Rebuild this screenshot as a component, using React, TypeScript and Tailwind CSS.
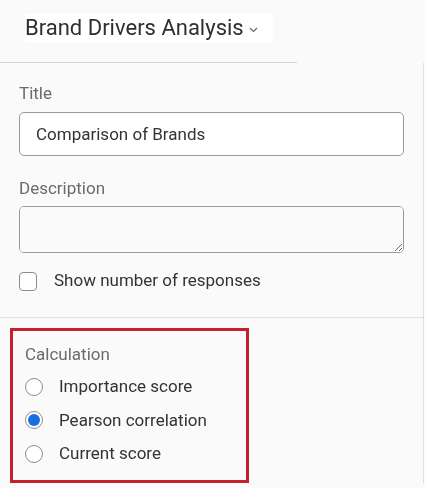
import { useState } from "react";

const options = [
  { id: "importance", label: "Importance score" },
  { id: "pearson", label: "Pearson correlation" },
  { id: "current", label: "Current score" },
];

function Radio({ checked }: { checked: boolean }) {
  return (
    <span className="flex h-[18px] w-[18px] shrink-0 items-center justify-center rounded-full border border-[#8c8c8c] bg-white">
      {checked && <span className="h-[12px] w-[12px] rounded-full bg-[#1a6fe0]" />}
    </span>
  );
}

export default function App() {
  const [calc, setCalc] = useState("pearson");
  const [showCount, setShowCount] = useState(false);

  return (
    <div
      className="h-[488px] w-[425px] overflow-hidden bg-[#fafafa] text-[#333]"
      style={{ fontFamily: "Roboto, 'Liberation Sans', sans-serif" }}
    >
      <div className="h-[63px] w-[297px] border-b border-[#d4d4d4] pt-[13px]">
        <div className="ml-[25px] flex h-[30px] w-[248px] items-center bg-white">
          <span className="text-[22px] leading-none text-[#2f2f2f]">Brand Drivers Analysis</span>
          <svg className="ml-[5px] mt-[4px]" width="9" height="6" viewBox="0 0 9 6" fill="none">
            <path d="M1 1l3.5 3.5L8 1" stroke="#666" strokeWidth="1.2" />
          </svg>
        </div>
      </div>

      <div className="mr-[1px] border-r border-[#e0e0e0]">
        <div className="border-b border-[#e2e2e2] px-[19px] pb-[26px] pt-[20px]">
          <label className="block text-[17px] leading-[20px] text-[#6b6b6b]">Title</label>
          <input
            defaultValue="Comparison of Brands"
            className="mt-[9px] block h-[44px] w-full rounded-[5px] border border-[#9a9a9a] bg-white px-[16px] text-[17px] text-[#333] outline-none"
          />
          <label className="mt-[22px] block text-[17px] leading-[20px] text-[#6b6b6b]">Description</label>
          <textarea className="mt-[8px] block h-[47px] w-full rounded-[5px] border border-[#9a9a9a] bg-[#fafafa] px-[16px] py-[10px] text-[17px] outline-none" />
          <label className="mt-[18px] flex h-[20px] cursor-pointer items-center gap-[17px]">
            <span
              onClick={() => setShowCount(!showCount)}
              className="h-[19px] w-[18px] shrink-0 rounded-[4px] border border-[#8c8c8c] bg-white"
            />
            <span className="text-[17px] text-[#333]">Show number of responses</span>
          </label>
        </div>

        <div className="px-[10px] pt-[10px]">
          <div className="h-[155px] w-[239px] border-[3px] border-[#c4212f] px-[12px] pt-[13px]">
            <div className="text-[17px] leading-[20px] text-[#6b6b6b]">Calculation</div>
            <div className="mt-[6px] flex flex-col">
              {options.map((o) => (
                <button
                  key={o.id}
                  onClick={() => setCalc(o.id)}
                  className="flex h-[33.5px] items-center gap-[16px] text-left"
                >
                  <Radio checked={calc === o.id} />
                  <span className="text-[17px] text-[#333]">{o.label}</span>
                </button>
              ))}
            </div>
          </div>
        </div>
      </div>
    </div>
  );
}
